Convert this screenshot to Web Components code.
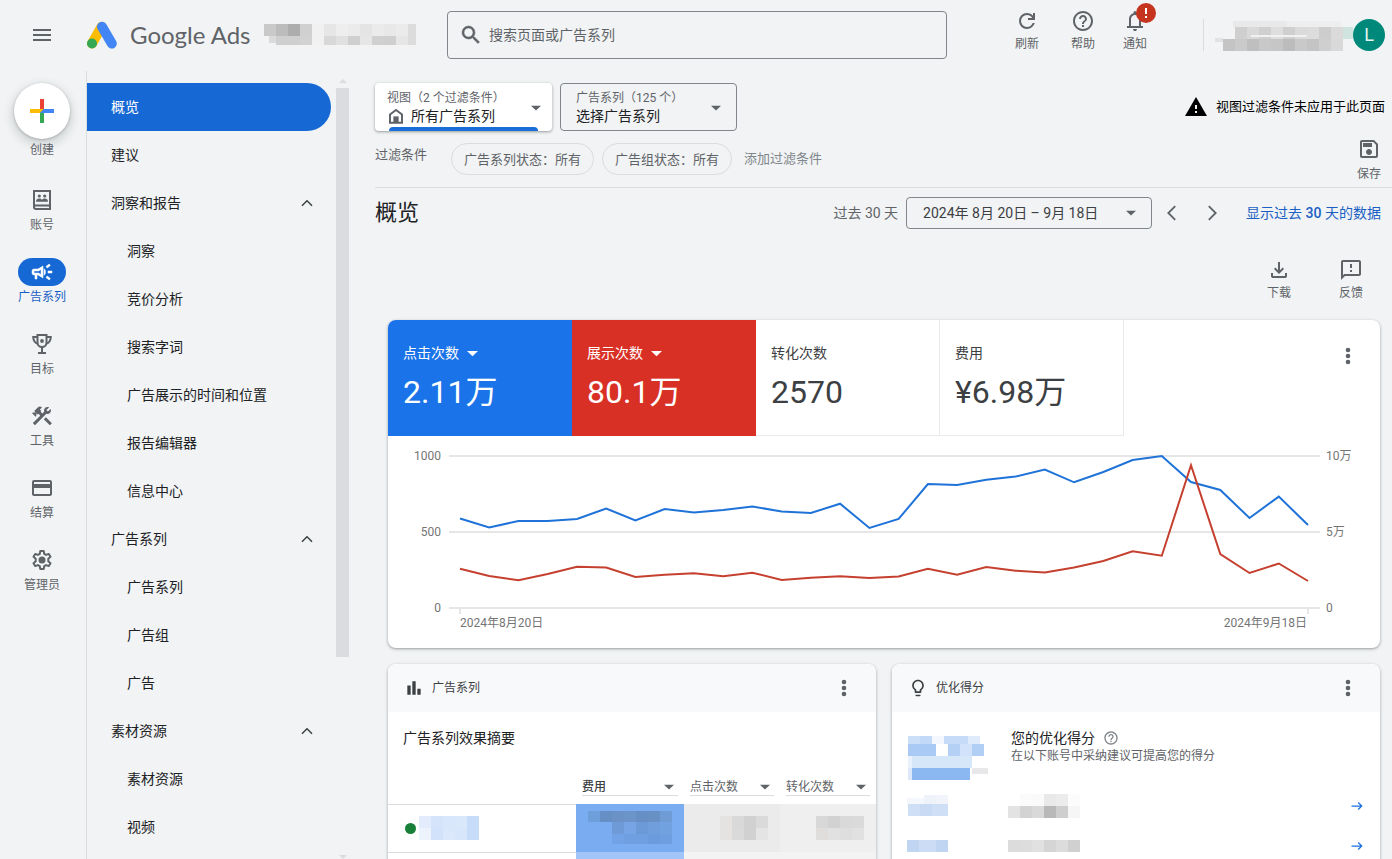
<!DOCTYPE html>
<html lang="zh-CN">
<head>
<meta charset="utf-8">
<meta name="viewport" content="width=device-width, initial-scale=1">
<title>概览 - Google Ads</title>
<style>
  html, body { margin: 0; height: 100%; }
  body {
    font-family: Roboto, "Noto Sans CJK SC", sans-serif;
    font-size: 14px; line-height: 20px; color: #202124; background: #f1f3f4;
    overflow: hidden;
  }
</style>
</head>
<body>
<ads-app></ads-app>

<script>
const RESET = `
  *, *::before, *::after { box-sizing: border-box; }
  button, input, select { font: inherit; color: inherit; background: none; border: 0; padding: 0; margin: 0; }
  button, select { cursor: pointer; }
  select { appearance: none; }
  a { color: inherit; text-decoration: none; }
  h1, h2, h3, p, ul { margin: 0; padding: 0; font: inherit; list-style: none; }
  ui-icon, pixel-mosaic { flex: none; }
`;

/* Registers an element whose shadow root is filled from styles and a markup function. */
function component(name, css, markup) {
  customElements.define(name, class extends HTMLElement {
    constructor() { super(); this.attachShadow({ mode: "open" }); }
    connectedCallback() {
      const t = document.createElement("template");
      t.innerHTML = `<style>${RESET}${css}</style>${markup(this)}`;
      this.shadowRoot.replaceChildren(t.content.cloneNode(true));
    }
  });
}
const attr = (el, n, d = "") => el.getAttribute(n) ?? d;

/* ---------- icons ---------- */
const ICONS = {
  menu: `<path d="M3 18h18v-2H3zm0-5h18v-2H3zm0-7v2h18V6z"/>`,
  search: `<path d="M15.5 14h-.79l-.28-.27A6.47 6.47 0 0 0 16 9.5 6.5 6.5 0 1 0 9.5 16c1.61 0 3.09-.59 4.23-1.57l.27.28v.79l5 4.99L20.49 19zm-6 0C7.01 14 5 11.99 5 9.5S7.01 5 9.5 5 14 7.01 14 9.5 11.99 14 9.5 14z" stroke="currentColor" stroke-width=".5"/>`,
  refresh: `<path d="M12 20q-3.35 0-5.675-2.325T4 12t2.325-5.675T12 4q1.725 0 3.3.713T18 6.75V4h2v7h-7V9h4.2q-.8-1.4-2.187-2.2T12 6Q9.5 6 7.75 7.75T6 12t1.75 4.25T12 18q1.925 0 3.475-1.1T17.65 14h2.1q-.7 2.65-2.85 4.325T12 20"/>`,
  help: `<path d="M11 18h2v-2h-2zm1-16C6.48 2 2 6.48 2 12s4.48 10 10 10 10-4.48 10-10S17.52 2 12 2zm0 18c-4.41 0-8-3.59-8-8s3.59-8 8-8 8 3.59 8 8-3.59 8-8 8zm0-14c-2.21 0-4 1.79-4 4h2c0-1.1.9-2 2-2s2 .9 2 2c0 2-3 1.75-3 5h2c0-2.25 3-2.5 3-5 0-2.21-1.79-4-4-4z"/>`,
  bell: `<path d="M4 19v-2h2v-7q0-2.075 1.25-3.687T10.5 4.2v-.7q0-.625.438-1.062T12 2t1.063.438T13.5 3.5v.7q2 .5 3.25 2.113T18 10v7h2v2zm8 3q-.825 0-1.412-.587T10 20h4q0 .825-.587 1.413T12 22m-4-5h8v-7q0-1.65-1.175-2.825T12 6T9.175 7.175T8 10z"/>`,
  save: `<path d="M17 3H5a2 2 0 0 0-2 2v14c0 1.1.89 2 2 2h14c1.1 0 2-.9 2-2V7zm2 16H5V5h11.17L19 7.83zm-7-7c-1.66 0-3 1.34-3 3s1.34 3 3 3 3-1.34 3-3-1.34-3-3-3zM6 6h9v4H6z"/>`,
  warning: `<path d="M1 21h22L12 2zm12-3h-2v-2h2zm0-4h-2v-4h2z"/>`,
  download: `<path d="M12 16l-5-5 1.4-1.45 2.6 2.6V4h2v8.15l2.6-2.6L17 11zm-6 4q-.825 0-1.412-.587T4 18v-3h2v3h12v-3h2v3q0 .825-.587 1.413T18 20z"/>`,
  feedback: `<path d="M20 2H4a2 2 0 0 0-2 2v18l4-4h14c1.1 0 2-.9 2-2V4c0-1.1-.9-2-2-2zm0 14H5.17L4 17.17V4h16zm-9-4h2v2h-2zm0-6h2v4h-2z"/>`,
  more: `<circle cx="12" cy="6" r="2.3"/><circle cx="12" cy="12" r="2.3"/><circle cx="12" cy="18" r="2.3"/>`,
  bars: `<path d="M4 9h4v11H4zm12 4h4v7h-4zm-6-9h4v16h-4z"/>`,
  bulb: `<path d="M9 21c0 .5.4 1 1 1h4c.6 0 1-.5 1-1v-1H9zm3-19C8.1 2 5 5.1 5 9c0 2.4 1.2 4.5 3 5.7V17c0 .5.4 1 1 1h6c.6 0 1-.5 1-1v-2.3c1.8-1.3 3-3.4 3-5.7 0-3.9-3.1-7-7-7zm2.9 11.1l-.9.6V16h-4v-2.3l-.9-.6C7.8 12.2 7 10.6 7 9c0-2.8 2.2-5 5-5s5 2.2 5 5c0 1.6-.8 3.2-2.1 4.1z"/>`,
  accounts: `<path d="M4 3h16v18H6a2 2 0 0 1-2-2z M4 17.5h16" fill="none" stroke="currentColor" stroke-width="2"/><circle cx="9.300" cy="8" r="1.600"/><circle cx="14.700" cy="8" r="1.600"/><path d="M6 13.800c0-2.200 1.400-3.200 3.200-3.200 1.200 0 2.200.4 2.800 1.400.6-1 1.600-1.400 2.800-1.400 1.800 0 3.200 1 3.200 3.200z"/>`,
  megaphone: `<path d="M18 11v2h4v-2zm-2 6.610c.96.71 2.21 1.65 3.200 2.390.4-.53.8-1.070 1.200-1.600-.99-.74-2.240-1.680-3.200-2.400zM20.400 5.600c-.4-.53-.8-1.070-1.200-1.600-.99.74-2.240 1.680-3.200 2.400.4.53.8 1.070 1.200 1.600.96-.72 2.210-1.650 3.200-2.400zM4 9a2 2 0 0 0-2 2v2c0 1.100.9 2 2 2h1v4h2v-4h1l5 3V6L8 9zm5.030 1.710L11 9.530v4.940L8.550 13H4v-2h4.550zM15.500 12c0-1.330-.58-2.530-1.500-3.350v6.690c.92-.81 1.500-2.010 1.500-3.340z" stroke="currentColor" stroke-width=".5"/>`,
  trophy: `<g fill="none" stroke="currentColor" stroke-width="2"><path d="M7.500 3h9v7.500a4.500 4.500 0 0 1-9 0z"/><path d="M7.500 5H3.200c.2 3.800 1.600 6 4.800 6.800M16.500 5h4.300c-.2 3.800-1.600 6-4.800 6.800M12 15v6M8 21h8"/></g><circle cx="12" cy="9" r="1.900"/>`,
  tools: `<path d="M13.780 15.300l6 6 2.110-2.160-6-6zM17.500 10c1.930 0 3.500-1.570 3.500-3.500 0-.58-.16-1.120-.41-1.600l-2.700 2.700-1.490-1.490 2.700-2.700c-.48-.25-1.020-.41-1.600-.41C15.570 3 14 4.570 14 6.500c0 .41.08.8.21 1.160l-1.850 1.850-1.780-1.780.71-.71-1.410-1.410L12 3.490a3 3 0 0 0-4.240 0L4.220 7.030l1.410 1.410H2.810l-.71.71 3.540 3.540.71-.71V9.150l1.410 1.410.71-.71 1.780 1.780-7.410 7.410 2.120 2.120L16.340 9.790c.36.13.75.21 1.160.21z"/>`,
  card: `<path d="M20 4H4a2 2 0 0 0-2 2v12c0 1.110.89 2 2 2h16c1.110 0 2-.89 2-2V6c0-1.110-.89-2-2-2zm0 14H4v-6h16zm0-10H4V6h16z"/>`,
  gear: `<path fill="none" stroke="currentColor" stroke-width="2" stroke-linejoin="round" d="M10.300 3h3.400l.5 2.800 1.900 1.100 2.700-1 1.700 2.900-2.200 1.900v2.600l2.200 1.900-1.700 2.900-2.700-1-1.900 1.100-.5 2.800h-3.400l-.5-2.800-1.900-1.100-2.700 1-1.700-2.900 2.200-1.900v-2.600L3.500 8.800l1.700-2.900 2.700 1 1.900-1.100z"/><circle cx="12" cy="12" r="3.500"/>`,
  home: `<path d="M4 10l8-6 8 6v11H4z" fill="none" stroke="currentColor" stroke-width="2.600"/><path d="M8.500 12.500h7V21h-7z"/>`,
  up: `<path d="M4.500 16L12 8.500l7.500 7.500" fill="none" stroke="currentColor" stroke-width="2.200"/>`,
  left: `<path d="M15.500 4.500L8 12l7.500 7.500" fill="none" stroke="currentColor" stroke-width="2"/>`,
  right: `<path d="M8.500 4.500L16 12l-7.500 7.500" fill="none" stroke="currentColor" stroke-width="2"/>`,
  forward: `<path d="M1 12h21M14.500 5l7 7-7 7" fill="none" stroke="currentColor" stroke-width="2.500"/>`,
  down: `<path d="M0 6.500h24L12 18z"/>`,
};
component("ui-icon", `
  :host { display: inline-block; width: var(--size, 24px); height: var(--size, 24px); }
  svg { display: block; width: 100%; height: 100%; fill: currentColor; }
`, el => `<svg viewBox="0 0 24 24" aria-hidden="true">${ICONS[attr(el, "name")]}</svg>`);

/* ---------- obscured private values, drawn as coarse blocks ---------- */
/* Each strip is [x, y, height, block width, colours...]. */
const MOSAICS = {
  account: [154, 22,
    [0, 0, 12, 12, "#c9c9c9", "#bcbcbc", "#adadad", "#d0d0d0", "#f1f1f1", "#e6e6e6", "#eeeeee", "#ebebeb", "#e4e4e4", "#ebebeb", "#e8e8e8", "#ebebeb"],
    [144, 0, 21, 8, "#dcdcdc"],
    [12, 12, 9, 12, "#cfcfcf", "#cfcfcf", "#d2d2d2", "#f1f1f1", "#d8d8d8", "#e0e0e0", "#cfcfcf", "#e6e6e6", "#d0d0d0", "#cfcfcf", "#e6e6e6"],
    [5, 12, 7, 7, "#dadada"]],
  user: [138, 32,
    [18, 2, 6, 54, "#e9e9e9", "#eeeeee"],
    [20, 8, 12, 12, "#cfcfcf", "#d9d9d9", "#cfcfcf", "#dedede", "#cfcfcf", "#dadada", "#dcdcdc", "#cdcdcd", "#dadada"],
    [128, 8, 12, 10, "#cfe3df"],
    [0, 19, 4, 8, "#e2e2e2"],
    [8, 20, 12, 12, "#c4c4c4", "#cacaca", "#bfbfbf", "#c8c8c8", "#c6c6c6", "#bcbcbc", "#c9c9c9", "#c4c4c4", "#cfcfcf", "#d9d9d9"],
    [36, 16, 2, 56, "#f1f1f1"]],
  campaign: [61, 24,
    [0, 0, 12, 12, "#e2ecfc", "#d5e4fb", "#d8e7fb", "#d9e8fb", "#c7dcf8"],
    [0, 12, 12, 12, "#edf3fd", "#d3e2fb", "#dbe8fb", "#d8e6fb", "#c7dcf8"]],
  cost: [84, 36,
    [0, 1, 11, 12, "#6f9fdb", "#668fc6", "#6a92c6", "#6b94c8", "#668fc6", "#6790c5", "#709cd5"],
    [24, 12, 12, 12, "#6e9bd8", "#76a4e4", "#6c9ad8", "#709edc", "#72a1e0"],
    [24, 24, 10, 12, "#72a3e6", "#6f9fe1", "#6f9fe1", "#6b9bdd", "#6e9ee0"]],
  clicks: [48, 24,
    [0, 0, 12, 12, "#e4e3e2", "#dad9d9", "#d1d1d1", "#dadada"],
    [0, 12, 12, 12, "#e4e3e2", "#d9dad9", "#d1d1d1", "#e4e4e4"]],
  conversions: [48, 24,
    [0, 0, 12, 12, "#d9d8d8", "#d3d2d2", "#d9d9d9", "#dadada"],
    [0, 12, 12, 12, "#dfdedd", "#e1e1e1", "#dedede", "#e1e1e1"]],
  score: [81, 46,
    [1, 1, 8, 12, "#cbdff9", "#c2d9f7", "#f4f8fe", "#c5dbf7", "#c5dbf7", "#dfeafa"],
    [1, 9, 12, 28, "#a8caf4"], [41, 9, 12, 12, "#b4d0f5", "#d1e2fa", "#b1cff5"],
    [5, 21, 12, 60, "#d7e7fa"], [1, 21, 12, 4, "#e9f1fc"],
    [65, 33, 6, 16, "#e8e8ea"], [1, 33, 12, 4, "#dde9fb"],
    [5, 33, 12, 58, "#8cb8f2"]],
  nameA: [41, 24,
    [0, 4, 8, 41, "#f4f8fd"], [17, 1, 9, 12, "#eef3fa", "#f1f5fb"],
    [1, 10, 12, 40, "#cfdff6"], [13, 10, 12, 12, "#c9dbf4"]],
  valueA: [72, 24,
    [12, 0, 12, 12, "#fbfbfb", "#fafafa", "#e9e9e9", "#ececec", "#fcfcfc"],
    [0, 12, 12, 12, "#e3e3e3", "#d3d3d3", "#d9d9d9", "#b9b9b9", "#cecece", "#f6f6f6"]],
  nameB: [41, 12, [0, 0, 12, 12, "#bfd5f2", "#cbdcf4", "#cbdcf4"], [29, 0, 12, 12, "#c0d5f2"]],
  valueB: [72, 12, [0, 0, 12, 12, "#dcdcdc", "#dddddd", "#e1e1e1", "#d5d5d5", "#dbdcdb", "#cfd0cf"]],
};
component("pixel-mosaic", `:host { display: inline-block; } svg { display: block; }`, el => {
  const [w, h, ...strips] = MOSAICS[attr(el, "name")];
  const blocks = strips.flatMap(([x, y, bh, bw, ...colors]) =>
    colors.map((c, i) => `<rect x="${x + i * bw}" y="${y}" width="${bw}" height="${bh}" fill="${c}"/>`)).join("");
  return `<svg width="${w}" height="${h}" viewBox="0 0 ${w} ${h}" shape-rendering="crispEdges" aria-hidden="true">${blocks}</svg>`;
});

/* ---------- icon above a caption ---------- */
component("icon-action", `
  :host { display: block; color: #5f6368; }
  button { display: flex; flex-direction: column; align-items: center; gap: var(--gap, 3px); width: 100%; font-size: 12px; line-height: 16px; }
  .icon { display: grid; position: relative; }
  ::slotted(*) { position: absolute; top: -6px; left: 13px; }
`, el => `<button type="button"><span class="icon"><ui-icon name="${attr(el, "icon")}"></ui-icon><slot></slot></span>${attr(el, "label")}</button>`);

/* ---------- header ---------- */
component("app-header", `
  :host { display: flex; align-items: center; height: 71px; padding: 0 7px 2px 30px; color: #5f6368; }
  .start { display: flex; align-items: center; flex: 0 0 417px; }
  .menu { display: grid; margin-right: 33px; }
  .brand { display: flex; align-items: center; gap: 13px; font: 24px/30px Lato, sans-serif; margin-right: 13px; }
  .brand svg { display: block; }
  form { display: flex; align-items: center; flex: 0 1 500px; height: 48px; border: 1px solid #80868b; border-radius: 4px; padding: 0 11px; gap: 6px; }
  input { flex: 1; min-width: 0; outline: 0; height: 24px; font-size: 14px; }
  input::placeholder { color: #5f6368; opacity: 1; }
  .actions { display: flex; margin-left: auto; align-self: flex-start; padding-top: 9px; }
  icon-action { width: 56px; }
  icon-action:last-child { width: 48px; }
  .badge { display: grid; place-items: center; width: 20px; height: 20px; border-radius: 50%; background: #c5341f; }
  .user { display: flex; align-items: center; height: 32px; margin-left: 44px; padding-left: 11px; border-left: 1px solid #dadce0; }
  .avatar { width: 32px; height: 32px; border-radius: 50%; background: #00897b; color: #e6f4f1; font-size: 18px; line-height: 32px; text-align: center; }
`, () => `
  <div class="start">
    <button class="menu" type="button" aria-label="主菜单"><ui-icon name="menu"></ui-icon></button>
    <a class="brand" href="#overview">
      <svg width="30" height="28" viewBox="0 0 30 28" aria-hidden="true" stroke-width="10" stroke-linecap="round">
        <path d="M5 22.500L14.600 5.800" stroke="#fbbc04"/><path d="M15 5.800l9.800 16.800" stroke="#4285f4"/><circle cx="5" cy="22.500" r="5" fill="#34a853"/>
      </svg>
      <span>Google Ads</span>
    </a>
    <pixel-mosaic name="account"></pixel-mosaic>
  </div>
  <form role="search">
    <ui-icon name="search"></ui-icon>
    <input type="text" placeholder="搜索页面或广告系列" aria-label="搜索页面或广告系列">
  </form>
  <div class="actions">
    <icon-action icon="refresh" label="刷新"></icon-action>
    <icon-action icon="help" label="帮助"></icon-action>
    <icon-action icon="bell" label="通知"><span class="badge"><svg width="4" height="12" viewBox="0 0 4 12" fill="#fff"><path d="M1 1h2v6H1zM1 9h2v2H1z"/></svg></span></icon-action>
  </div>
  <div class="user"><pixel-mosaic name="user"></pixel-mosaic><button class="avatar" type="button" aria-label="账号">L</button></div>
`);

/* ---------- left rail ---------- */
component("rail-item", `
  :host { display: block; color: #5f6368; }
  a { display: flex; flex-direction: column; align-items: center; gap: 3px; font-size: 12px; line-height: 16px; }
  .pill { display: grid; place-items: center; width: 48px; height: 28px; border-radius: 14px; }
  :host([active]) { color: #1a5fc4; }
  :host([active]) .pill { background: #1669d5; color: #fff; }
`, el => `<a href="#${attr(el, "icon")}"><span class="pill"><ui-icon name="${attr(el, "icon")}"></ui-icon></span>${attr(el, "label")}</a>`);

component("nav-rail", `
  :host { display: flex; flex-direction: column; width: 87px; padding: 12px 2px 0 0; border-right: 1px solid #dadce0; gap: 25px; }
  .create { display: flex; flex-direction: column; align-items: center; gap: 3px; margin-bottom: 3px; color: #5f6368; font-size: 12px; line-height: 16px; }
  .disc { display: grid; place-items: center; width: 56px; height: 56px; border-radius: 50%; background: #fff; box-shadow: 0 1px 3px rgba(60,64,67,.3), 0 4px 8px 3px rgba(60,64,67,.15); }
`, () => `
  <button class="create" type="button">
    <span class="disc"><svg width="24" height="24" viewBox="0 0 24 24" aria-hidden="true">
      <path fill="#ea4335" d="M10 0h4v10l-4 4z"/><path fill="#fbbc04" d="M0 10h14l-4 4H0z"/><path fill="#34a853" d="M10 14l4-4v14h-4z"/><path fill="#4285f4" d="M14 10h10v4H10z"/>
    </svg></span>创建
  </button>
  <rail-item icon="accounts" label="账号"></rail-item>
  <rail-item icon="megaphone" label="广告系列" active></rail-item>
  <rail-item icon="trophy" label="目标"></rail-item>
  <rail-item icon="tools" label="工具"></rail-item>
  <rail-item icon="card" label="结算"></rail-item>
  <rail-item icon="gear" label="管理员"></rail-item>
`);

/* ---------- section navigation ---------- */
component("side-nav-item", `
  :host { display: block; }
  a, button { display: flex; align-items: center; justify-content: space-between; width: 100%; height: 48px; padding: 0 16px 0 24px; border-radius: 0 24px 24px 0; text-align: left; }
  :host([sub]) a { padding-left: 40px; }
  :host([active]) a { background: #1669d5; color: #fff; }
  ui-icon { --size: 16px; color: #3c4043; }
`, el => el.hasAttribute("group")
  ? `<button type="button" aria-expanded="true"><slot></slot><ui-icon name="up"></ui-icon></button>`
  : `<a href="#section"><slot></slot></a>`);

component("side-nav", `
  :host { display: flex; min-height: 0; overflow: hidden; }
  nav { flex: 1; padding: 12px 5px 0 0; }
  .scroll { display: flex; flex-direction: column; align-items: center; flex: 0 0 13px; padding: 8px 0 0; color: #dadce0; }
  .thumb { width: 13px; flex: 0 0 73%; margin-top: 5px; background: #dadce0; }
  .scroll svg { display: block; fill: currentColor; }
  .scroll svg:last-child { margin-top: auto; }
`, () => {
  const items = [["概览", "active"], ["建议", ""], ["洞察和报告", "group"], ["洞察", "sub"], ["竞价分析", "sub"], ["搜索字词", "sub"],
    ["广告展示的时间和位置", "sub"], ["报告编辑器", "sub"], ["信息中心", "sub"], ["广告系列", "group"], ["广告系列", "sub"],
    ["广告组", "sub"], ["广告", "sub"], ["素材资源", "group"], ["素材资源", "sub"], ["视频", "sub"]];
  return `<nav aria-label="广告系列">${items.map(([t, kind]) => `<side-nav-item ${kind}>${t}</side-nav-item>`).join("")}</nav>
  <div class="scroll" aria-hidden="true">
    <svg width="8" height="4"><path d="M4 0l4 4H0z"/></svg><span class="thumb"></span><svg width="8" height="4"><path d="M0 0h8L4 4z"/></svg>
  </div>`;
});

/* ---------- filters ---------- */
component("scope-picker", `
  :host { display: block; flex: 0 0 177px; }
  button { position: relative; display: flex; align-items: center; justify-content: space-between; width: 100%; height: 48px; padding: 2px 15px 0; border: 1px solid #80868b; border-radius: 4px; text-align: left; }
  .label { display: block; font-size: 12px; line-height: 16px; color: #5f6368; white-space: nowrap; }
  .value { display: flex; align-items: center; gap: 6px; line-height: 20px; }
  .value ui-icon { --size: 18px; color: #5f6368; }
  .arrow { --size: 10px; color: #5f6368; }
  :host([selected]) button { padding: 2px 11px 0 12px; border: 0; background: #fff; box-shadow: 0 1px 2px rgba(60,64,67,.3), 0 1px 3px 1px rgba(60,64,67,.15); }
  :host([selected]) button::after { content: ""; position: absolute; left: 14px; right: 14px; bottom: 0; height: 4px; border-radius: 4px 4px 0 0; background: #1a6ed8; }
`, el => `<button type="button" aria-haspopup="dialog">
    <span><span class="label">${attr(el, "label")}</span><span class="value">${el.hasAttribute("icon") ? `<ui-icon name="${attr(el, "icon")}"></ui-icon>` : ""}${attr(el, "value")}</span></span>
    <ui-icon class="arrow" name="down"></ui-icon></button>`);

component("filter-bar", `
  :host { display: flex; flex-direction: column; gap: 12px; padding: 12px 7px 12px 0; border-bottom: 1px solid #dadce0; }
  .row { display: flex; align-items: center; gap: 8px; }
  .notice { display: flex; align-items: center; gap: 8px; margin-left: auto; font-size: 13px; color: #000; }
  .filters { height: 32px; font-size: 13px; color: #5f6368; }
  .name { width: 68px; align-self: flex-start; padding-top: 2px; }
  .chip { height: 32px; padding: 2px 12px 0; border: 1px solid #dadce0; border-radius: 16px; }
  .add { margin-left: 4px; color: #80868b; }
  icon-action { --gap: 5px; width: 32px; height: 42px; margin-left: auto; align-self: flex-start; margin-top: -6px; }
`, () => `
  <div class="row">
    <scope-picker selected icon="home" label="视图（2 个过滤条件）" value="所有广告系列"></scope-picker>
    <scope-picker label="广告系列（125 个）" value="选择广告系列"></scope-picker>
    <p class="notice"><ui-icon name="warning"></ui-icon>视图过滤条件未应用于此页面</p>
  </div>
  <div class="row filters">
    <span class="name">过滤条件</span>
    <button class="chip" type="button">广告系列状态：所有</button>
    <button class="chip" type="button">广告组状态：所有</button>
    <button class="add" type="button">添加过滤条件</button>
    <icon-action icon="save" label="保存"></icon-action>
  </div>
`);

component("page-heading", `
  :host { display: flex; flex-direction: column; gap: 29px; padding: 9px 11px 19px 0; }
  .row { display: flex; align-items: center; height: 32px; }
  h1 { flex: 1; font-size: 22px; line-height: 30px; }
  .range { color: #5f6368; margin-right: 8px; }
  .date { display: flex; align-items: center; justify-content: space-between; width: 246px; height: 32px; padding: 0 15px 0 16px; border: 1px solid #80868b; border-radius: 4px; color: #3c4043; }
  .date ui-icon { --size: 10px; color: #5f6368; }
  .step { display: grid; place-items: center; width: 40px; color: #5f6368; }
  .step ui-icon { --size: 22px; }
  .link { margin-left: 14px; color: #1a5fc4; }
  .tools { display: flex; justify-content: flex-end; gap: 40px; padding-right: 14px; }
  .tools icon-action { width: 32px; }
  .link b { font-weight: 500; }
`, () => `
  <div class="row">
    <h1>概览</h1>
    <span class="range">过去 30 天</span>
    <button class="date" type="button" aria-haspopup="dialog">2024年 8月 20日 – 9月 18日<ui-icon name="down"></ui-icon></button>
    <button class="step" type="button" aria-label="上一时间段"><ui-icon name="left"></ui-icon></button>
    <button class="step" type="button" aria-label="下一时间段"><ui-icon name="right"></ui-icon></button>
    <a class="link" href="#last30">显示过去 <b>30</b> 天的数据</a>
  </div>
  <div class="tools">
    <icon-action icon="download" label="下载"></icon-action>
    <icon-action icon="feedback" label="反馈"></icon-action>
  </div>
`);

/* ---------- metrics and chart ---------- */
component("metric-tile", `
  :host { display: block; flex: 0 1 184px; min-width: 0; height: 116px; padding: 23px 15px; color: #3c4043; border: solid #e8eaed; border-width: 0 1px 1px 0; }
  :host([tone]) { border: 0; color: #fff; }
  :host([tone="blue"]) { background: #1a73e8; }
  :host([tone="red"]) { background: #d93025; }
  .name { height: 20px; line-height: 20px; }
  .value { margin-top: 9px; font-size: 32px; line-height: 40px; white-space: nowrap; }
  .pick { display: grid; grid-template-columns: 59px 20px; align-items: center; height: 20px; }
  .pick select { grid-area: 1 / 1 / 2 / 3; height: 20px; line-height: 20px; }
  .pick ui-icon { --size: 11px; grid-area: 1 / 2; justify-self: center; pointer-events: none; }
  option { color: #202124; }
`, el => `${el.hasAttribute("tone")
    ? `<span class="pick"><select aria-label="指标"><option>${attr(el, "label")}</option></select><ui-icon name="down"></ui-icon></span>`
    : `<div class="name">${attr(el, "label")}</div>`}
  <div class="value">${attr(el, "value")}</div>`);

const CLICKS = [63.5, 72.5, 66, 66, 64, 53.5, 65.5, 54, 57.5, 55, 51.5, 56.5, 58, 48.7, 73, 64, 29, 30, 24.7, 21.5, 14.5, 27.3, 17, 5, 1, 27, 35, 63, 41.6, 70];
const VIEWS = [113.7, 121, 125.3, 119, 111.7, 112.5, 122, 119.7, 118.3, 121.3, 117.7, 125, 122.8, 121.2, 123, 121.4, 113.7, 119.7, 112, 115.7, 117.5, 112.5, 106, 96.3, 100.7, 10.3, 99, 118, 108.5, 126];
component("line-chart", `
  :host { display: grid; grid-template-columns: 53px 1fr 54px; padding: 12px 0 17px; font-size: 12px; line-height: 16px; color: #757575; }
  .axis { display: flex; flex-direction: column; justify-content: space-between; height: 168px; }
  .axis.left { text-align: right; }
  .plot { margin: 7px 6px 0 8px; }
  .lines { padding: 0 12px 0 11px; background:
      linear-gradient(#e6e6e6, #e6e6e6) 0 0 / 100% 2px no-repeat,
      linear-gradient(#e6e6e6, #e6e6e6) 0 50% / 100% 2px no-repeat,
      linear-gradient(#e6e6e6, #e6e6e6) 0 100% / 100% 2px no-repeat; }
  svg { display: block; width: 100%; height: 154px; overflow: visible; }
  polyline, path { fill: none; stroke-width: 2; vector-effect: non-scaling-stroke; }
  .dates { display: flex; justify-content: space-between; padding: 6px 13px 0 11px; }
`, () => {
  const line = (values, color) => `<polyline stroke="${color}" points="${values.map((y, i) => `${(i * 848 / 29).toFixed(1)},${y}`).join(" ")}"/>`;
  return `
  <div class="axis left"><span>1000</span><span>500</span><span>0</span></div>
  <div class="plot">
    <div class="lines"><svg viewBox="0 0 848 154" preserveAspectRatio="none" role="img" aria-label="点击次数和展示次数趋势">
      <path stroke="#e6e6e6" d="M0 154v5M848 154v5"/>${line(CLICKS, "#1f73d8")}${line(VIEWS, "#c5402f")}</svg></div>
    <div class="dates"><span>2024年8月20日</span><span>2024年9月18日</span></div>
  </div>
  <div class="axis"><span>10万</span><span>5万</span><span>0</span></div>`;
});

component("metrics-card", `
  :host { display: block; overflow: hidden; border-radius: 8px; background: #fff; box-shadow: 0 1px 2px rgba(60,64,67,.3), 0 1px 3px 1px rgba(60,64,67,.15); }
  .tiles { display: flex; }
  .more { display: grid; margin: 24px 20px 0 auto; align-self: flex-start; color: #5f6368; }
`, () => `
  <div class="tiles">
    <metric-tile tone="blue" label="点击次数" value="2.11万"></metric-tile>
    <metric-tile tone="red" label="展示次数" value="80.1万"></metric-tile>
    <metric-tile label="转化次数" value="2570"></metric-tile>
    <metric-tile label="费用" value="¥6.98万"></metric-tile>
    <button class="more" type="button" aria-label="更多选项"><ui-icon name="more"></ui-icon></button>
  </div>
  <line-chart></line-chart>
`);

/* ---------- lower cards ---------- */
component("panel-card", `
  :host { display: block; overflow: hidden; min-width: 0; border-radius: 8px; background: #fff; box-shadow: 0 1px 2px rgba(60,64,67,.3), 0 1px 3px 1px rgba(60,64,67,.15); }
  header { display: flex; align-items: center; gap: 8px; height: 48px; padding: 0 20px 0 16px; background: #f8f9fa; color: #3c4043; font-size: 12px; line-height: 16px; }
  header > ui-icon { --size: 20px; }
  button { display: grid; margin-left: auto; color: #5f6368; }
`, el => `<header><ui-icon name="${attr(el, "icon")}"></ui-icon><h2>${attr(el, "label")}</h2>
  <button type="button" aria-label="更多选项"><ui-icon name="more"></ui-icon></button></header><slot></slot>`);

component("campaign-summary", `
  :host { display: block; }
  h3 { padding: 16px 15px 0; line-height: 20px; }
  table { width: 100%; margin-top: 30px; border-collapse: collapse; table-layout: fixed; font-size: 12px; line-height: 16px; }
  th, td { padding: 0; font-weight: 400; }
  thead th { height: 26px; padding: 0 6px 8px; vertical-align: top; }
  th.cost { width: 108px; } th.num { width: 96px; }
  .pick { display: grid; grid-template-columns: 1fr 18px; align-items: center; height: 18px; border-bottom: 1px solid #dadce0; color: #5f6368; }
  .pick select { grid-area: 1 / 1 / 2 / 3; height: 16px; line-height: 16px; color: #5f6368; }
  .cost .pick select { font-weight: 500; color: #3c4043; }
  .pick ui-icon { --size: 10px; grid-area: 1 / 2; justify-self: center; pointer-events: none; }
  tbody tr { height: 48px; }
  tbody th { border-top: 1px solid #dadce0; text-align: left; }
  .who { display: flex; align-items: center; gap: 3px; padding-left: 17px; }
  .dot { width: 11px; height: 11px; border-radius: 50%; background: #188038; }
  td { text-align: right; padding-right: 12px; background: #efefef; }
  td.cost { background: #7aacf2; } td.clicks { background: #ebebeb; }
  .next td { background: #fff; } .next td.cost { background: #a1c5f8; } .next td.num { background: #f3f3f3; }
  pixel-mosaic { vertical-align: top; }
`, () => `
  <h3>广告系列效果摘要</h3>
  <table>
    <thead><tr>
      <th aria-label="名称"></th>
      <th class="cost"><span class="pick"><select aria-label="第一列指标"><option>费用</option></select><ui-icon name="down"></ui-icon></span></th>
      <th class="num"><span class="pick"><select aria-label="第二列指标"><option>点击次数</option></select><ui-icon name="down"></ui-icon></span></th>
      <th class="num"><span class="pick"><select aria-label="第三列指标"><option>转化次数</option></select><ui-icon name="down"></ui-icon></span></th>
    </tr></thead>
    <tbody>
      <tr><th scope="row"><span class="who"><span class="dot"></span><pixel-mosaic name="campaign"></pixel-mosaic></span></th>
        <td class="cost"><pixel-mosaic name="cost"></pixel-mosaic></td><td class="clicks"><pixel-mosaic name="clicks"></pixel-mosaic></td><td><pixel-mosaic name="conversions"></pixel-mosaic></td></tr>
      <tr class="next"><th scope="row"></th><td class="cost"></td><td class="num"></td><td class="num"></td></tr>
    </tbody>
  </table>
`);

component("score-summary", `
  :host { display: block; padding: 16px 17px 0 15px; }
  .top, li { display: grid; grid-template-columns: 101px 1fr auto; align-items: center; }
  .top { align-items: start; height: 58px; }
  .top pixel-mosaic { margin-top: 7px; }
  .text { padding-left: 3px; }
  h3 { display: flex; align-items: center; gap: 8px; height: 20px; }
  h3 ui-icon { --size: 16px; color: #80868b; }
  p { font-size: 12px; line-height: 16px; color: #5f6368; }
  li { height: 40px; }
  li pixel-mosaic, li a { display: block; }
  li a { color: #1a73e8; }
  li a ui-icon { --size: 12px; display: block; }
`, () => `
  <div class="top"><pixel-mosaic name="score"></pixel-mosaic>
    <div class="text"><h3>您的优化得分<ui-icon name="help"></ui-icon></h3><p>在以下账号中采纳建议可提高您的得分</p></div></div>
  <ul>
    <li><pixel-mosaic name="nameA"></pixel-mosaic><pixel-mosaic name="valueA"></pixel-mosaic><a href="#first" aria-label="打开"><ui-icon name="forward"></ui-icon></a></li>
    <li><pixel-mosaic name="nameB"></pixel-mosaic><pixel-mosaic name="valueB"></pixel-mosaic><a href="#second" aria-label="打开"><ui-icon name="forward"></ui-icon></a></li>
  </ul>
`);

/* ---------- shell ---------- */
component("ads-app", `
  :host { display: grid; grid-template: 71px minmax(0, 1fr) / 87px 262px minmax(0, 1fr); height: 100vh; }
  app-header { grid-column: 1 / -1; }
  main { min-height: 0; overflow: hidden; padding-left: 26px; }
  .cards { display: grid; grid-template-columns: repeat(2, minmax(0, 1fr)); gap: 16px; padding: 0 12px 16px 13px; }
  metrics-card { grid-column: 1 / -1; }
`, () => `
  <app-header></app-header>
  <nav-rail></nav-rail>
  <side-nav></side-nav>
  <main>
    <filter-bar></filter-bar>
    <page-heading></page-heading>
    <div class="cards">
      <metrics-card></metrics-card>
      <panel-card icon="bars" label="广告系列"><campaign-summary></campaign-summary></panel-card>
      <panel-card icon="bulb" label="优化得分"><score-summary></score-summary></panel-card>
    </div>
  </main>
`);
</script>
</body>
</html>
